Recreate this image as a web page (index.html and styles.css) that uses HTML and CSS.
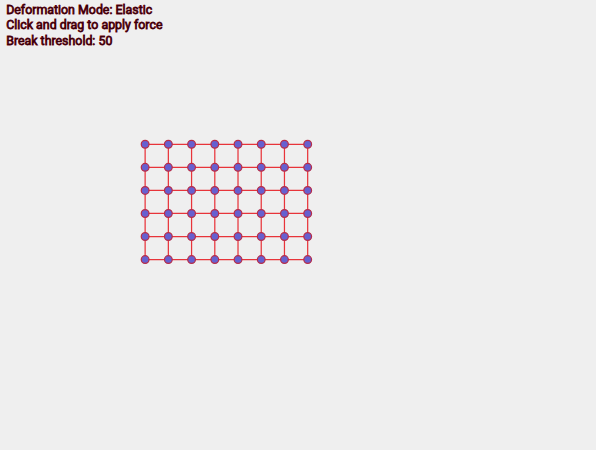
FILE: index.html
```
<!DOCTYPE html>
<html lang="en">
<head>
<meta charset="utf-8">
<title>Elastic mesh</title>
<link rel="stylesheet" href="styles.css">
</head>
<body>
<main class="stage">
  <svg class="scene" viewBox="0 0 770 581" preserveAspectRatio="xMinYMin meet">
    <g id="mesh"></g>
    <g class="info">
      <text x="8" y="18">Deformation Mode: Elastic</text>
      <text x="8" y="38">Click and drag to apply force</text>
      <text x="8" y="58">Break threshold: 50</text>
    </g>
  </svg>
</main>
<script src="mesh.js"></script>
</body>
</html>
```
FILE: styles.css
```
body {
  margin: 0;
  background: #efefef;
  font-family: Roboto, sans-serif;
}

.scene {
  display: block;
  width: 100%;
  height: 100vh;
}

.spring {
  stroke: #e8343a;
  stroke-width: 1.6;
}

.node {
  fill: #6660d0;
  stroke: #b82c48;
  stroke-width: 1.6;
}

.info {
  font-size: 16px;
  fill: #38000a;
  stroke: #6c000c;
  stroke-width: 1;
  paint-order: stroke fill;
}
```
FILE: mesh.js
```
const COLS = 8;
const ROWS = 6;
const ORIGIN = { x: 187.5, y: 186.4 };
const STEP = { x: 30, y: 29.8 };
const mesh = document.getElementById("mesh");

function add(tag, className, attributes) {
  const shape = document.createElementNS("http://www.w3.org/2000/svg", tag);
  shape.setAttribute("class", className);
  for (const name in attributes) shape.setAttribute(name, attributes[name]);
  mesh.append(shape);
}

const px = (col) => ORIGIN.x + col * STEP.x;
const py = (row) => ORIGIN.y + row * STEP.y;

for (let row = 0; row < ROWS; row++) {
  add("line", "spring", { x1: px(0), y1: py(row), x2: px(COLS - 1), y2: py(row) });
}
for (let col = 0; col < COLS; col++) {
  add("line", "spring", { x1: px(col), y1: py(0), x2: px(col), y2: py(ROWS - 1) });
}
for (let row = 0; row < ROWS; row++) {
  for (let col = 0; col < COLS; col++) {
    add("circle", "node", { cx: px(col), cy: py(row), r: 5 });
  }
}
```
